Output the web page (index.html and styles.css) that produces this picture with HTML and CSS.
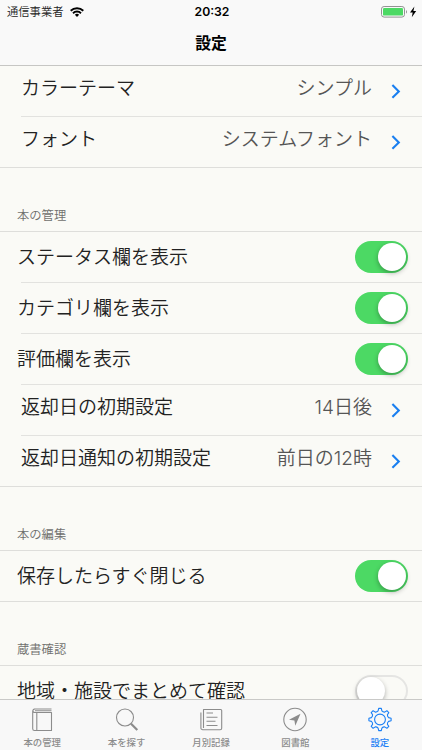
FILE: index.html
```html
<!DOCTYPE html>
<html lang="ja">
<head>
    <meta charset="UTF-8">
    <meta name="viewport" content="width=device-width, initial-scale=1.0">
    <title>設定</title>
    <link rel="stylesheet" href="styles.css">
</head>
<body>
    <div id="app">
        <header id="top-bar">
            <div class="status">
                <div class="carrier">
                    <span>通信事業者</span>
                    <svg width="14" height="10" viewBox="0 0 14 10" fill="none" stroke="#000" stroke-width="1.9">
                        <path d="M.7 3.8a9 9 0 0 1 12.6 0M3 6.2a5.7 5.7 0 0 1 8 0"/>
                        <path d="M7 9.9L4.9 7.8a3 3 0 0 1 4.2 0z" fill="#000" stroke="none"/>
                    </svg>
                </div>
                <time class="clock">20:32</time>
                <div class="battery">
                    <svg width="36" height="12" viewBox="0 0 36 12">
                        <rect x=".5" y=".5" width="23" height="10.6" rx="2.6" fill="none" stroke="#929292"/>
                        <rect x="2" y="2" width="20" height="7.6" rx="1.2" fill="#4cd964"/>
                        <path d="M25 4v3.6c1.3-.5 1.3-3.1 0-3.6z" fill="#929292"/>
                        <path d="M33.4 .6L29 6.5h2.7l-.9 4.7 4.400-6.300h-2.800z" fill="#000"/>
                    </svg>
                </div>
            </div>
            <h1>設定</h1>
        </header>
        <main>
            <section class="group first">
                <div class="row link">
                    <span class="label">カラーテーマ</span>
                    <span class="value">シンプル</span>
                    <svg class="chevron" viewBox="0 0 10 15"><path d="M1.4 1.1l6.4 6.3-6.4 6.3"/></svg>
                </div>
                <div class="row link">
                    <span class="label">フォント</span>
                    <span class="value">システムフォント</span>
                    <svg class="chevron" viewBox="0 0 10 15"><path d="M1.4 1.1l6.4 6.3-6.4 6.3"/></svg>
                </div>
            </section>
            <h2>本の管理</h2>
            <section class="group">
                <div class="row">
                    <span class="label">ステータス欄を表示</span>
                    <span class="switch on"></span>
                </div>
                <div class="row">
                    <span class="label">カテゴリ欄を表示</span>
                    <span class="switch on"></span>
                </div>
                <div class="row">
                    <span class="label">評価欄を表示</span>
                    <span class="switch on"></span>
                </div>
                <div class="row link">
                    <span class="label">返却日の初期設定</span>
                    <span class="value">14日後</span>
                    <svg class="chevron" viewBox="0 0 10 15"><path d="M1.4 1.1l6.4 6.3-6.4 6.3"/></svg>
                </div>
                <div class="row link">
                    <span class="label">返却日通知の初期設定</span>
                    <span class="value">前日の12時</span>
                    <svg class="chevron" viewBox="0 0 10 15"><path d="M1.4 1.1l6.4 6.3-6.4 6.3"/></svg>
                </div>
            </section>
            <h2>本の編集</h2>
            <section class="group">
                <div class="row">
                    <span class="label">保存したらすぐ閉じる</span>
                    <span class="switch on"></span>
                </div>
            </section>
            <h2>蔵書確認</h2>
            <section class="group">
                <div class="row">
                    <span class="label">地域・施設でまとめて確認</span>
                    <span class="switch"></span>
                </div>
            </section>
        </main>
        <nav id="tab-bar">
            <div class="tab">
                <svg width="26" height="26" viewBox="0 0 26 26">
                    <path d="M22.5 2H6a2.3 2.3 0 0 0-2.3 2.3v17.4a1.8 1.8 0 0 0 1.8 1.8h17v-18H5.7a1.7 1.7 0 0 1 0-3.5M7.8 5.5v18M6 3.8h16.5"/>
                </svg>
                <span>本の管理</span>
            </div>
            <div class="tab">
                <svg width="26" height="26" viewBox="0 0 26 26">
                    <circle cx="11" cy="10.5" r="8.5"/>
                    <path d="M17 16.7l6.3 6.3" stroke-width="2.2"/>
                </svg>
                <span>本を探す</span>
            </div>
            <div class="tab">
                <svg width="26" height="26" viewBox="0 0 26 26">
                    <path d="M5.5 20.9V2.5h17.2a1 1 0 0 1 1 1v17.7a1.5 1.5 0 0 1-1.5 1.5H4.700a1.800 1.800 0 0 1-1.800-1.800V5.500M8.500 6H15M8.500 10.200h11M8.500 14.300h9M8.500 18.500h11"/>
                </svg>
                <span>月別記録</span>
            </div>
            <div class="tab">
                <svg width="26" height="26" viewBox="0 0 26 26">
                    <circle cx="13" cy="12.5" r="11.2"/>
                    <path class="solid" d="M18.5 6.8L7 12.7l5.4.8.9 5.3z"/>
                </svg>
                <span>図書館</span>
            </div>
            <div class="tab active">
                <svg width="26" height="26" viewBox="0 0 26 26">
                    <circle cx="13" cy="12.5" r="5.4"/>
                    <path d="M14.3 1.4L14.9 3.9Q16 5.2 17.7 5.1L19.9 3.7L21.8 5.6L20.4 7.8Q20.3 9.5 21.6 10.6L24.1 11.2V13.8L21.6 14.4Q20.3 15.5 20.4 17.2L21.8 19.4L19.9 21.3L17.7 19.9Q16 19.8 14.9 21.1L14.3 23.6H11.7L11.1 21.1Q10 19.8 8.3 19.9L6.1 21.3L4.2 19.4L5.6 17.2Q5.7 15.5 4.4 14.4L1.9 13.8V11.2L4.4 10.6Q5.7 9.5 5.6 7.8L4.2 5.6L6.1 3.7L8.3 5.1Q10 5.2 11.1 3.9L11.7 1.4z"/>
                </svg>
                <span>設定</span>
            </div>
        </nav>
    </div>
</body>
</html>
```
FILE: styles.css
```css
* {
    box-sizing: border-box;
}
body {
    font-family: Inter, "Noto Sans CJK JP", sans-serif;
    margin: 0;
    background: #fafaf6;
    color: #222;
}
#app {
    width: 422px;
    height: 750px;
    display: flex;
    flex-direction: column;
    overflow: hidden;
}
#top-bar {
    flex: none;
    height: 66px;
    background: #f9f9f9;
    border-bottom: 1px solid #c6c6c4;
}
.status {
    height: 22px;
    padding: 0 5px 0 7px;
    display: grid;
    grid-template-columns: 1fr auto 1fr;
    align-items: center;
    font-size: 11.3px;
    font-weight: 350;
    line-height: 22px;
}
.carrier {
    display: flex;
    align-items: center;
    gap: 6px;
}
.clock {
    font-size: 12.2px;
    font-weight: 600;
    color: #000;
    padding-top: 1px;
}
.battery {
    display: flex;
    justify-content: flex-end;
}
h1 {
    margin: 0;
    font-size: 15.8px;
    font-weight: 700;
    line-height: 44px;
    text-align: center;
    color: #000;
}
main {
    flex: 1;
    min-height: 0;
    overflow: hidden;
}
.group {
    border-top: 1px solid #dededb;
    border-bottom: 1px solid #dededb;
}
.group.first {
    border-top: none;
}
.row {
    display: flex;
    align-items: center;
    height: 50px;
    padding: 0 14px 0 17px;
    font-size: 19px;
    font-weight: 350;
    line-height: 28px;
}
.row + .row {
    height: 51px;
    border-top: 1px solid #e2e2df;
    margin-left: 21px;
    padding-left: 0;
}
.row + .row .label {
    margin-left: -4px;
}
.row.link {
    padding-left: 21px;
    padding-right: 21px;
}
.row + .row.link {
    padding-left: 0;
}
.label {
    flex: 1;
    padding-top: 2px;
}
.row.link .label {
    margin-left: 0;
}
.link .label,
.link .value {
    padding-top: 0;
    padding-bottom: 4px;
}
.value {
    color: #555;
}
.chevron {
    width: 10px;
    height: 15px;
    margin-left: 19px;
    fill: none;
    stroke: #1a7ff0;
    stroke-width: 2.1;
}
h2 {
    margin: 0;
    height: 63px;
    padding: 32px 17px 0;
    font-size: 12.3px;
    font-weight: 350;
    line-height: 31px;
    color: #6f6f6d;
}
.switch {
    width: 53px;
    height: 32px;
    padding: 2px;
    border-radius: 16px;
    display: flex;
    box-shadow: inset 0 0 0 2px #e5e5e3;
}
.switch::before {
    content: "";
    width: 28px;
    height: 28px;
    border-radius: 50%;
    background: #fff;
    box-shadow: 0 2px 5px rgba(0, 0, 0, 0.3);
}
.switch.on {
    background: #4cd964;
    box-shadow: none;
    justify-content: flex-end;
}
#tab-bar {
    flex: none;
    height: 51px;
    display: flex;
    background: #f8f8f8;
    border-top: 1px solid #c9c9c7;
}
.tab {
    flex: 1;
    display: flex;
    flex-direction: column;
    align-items: center;
    padding-top: 7px;
    font-size: 9.4px;
    font-weight: 500;
    line-height: 14px;
    color: #8c8c8c;
}
.tab svg {
    margin-bottom: 3px;
    fill: none;
    stroke: currentColor;
    stroke-width: 1.1;
    stroke-linejoin: round;
}
.tab .solid {
    fill: currentColor;
    stroke: none;
}
.tab.active {
    color: #1a7ff5;
}
```
